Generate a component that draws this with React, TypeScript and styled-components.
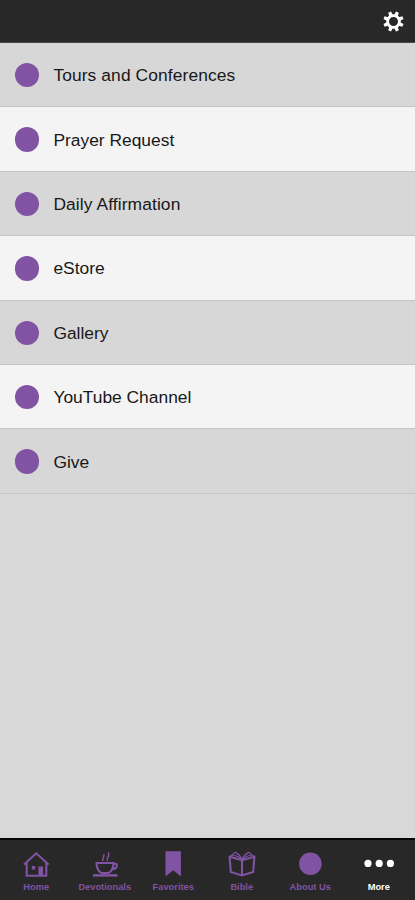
import React from "react";
import styled, { createGlobalStyle } from "styled-components";

const PURPLE = "#8053a3";

const GlobalStyle = createGlobalStyle`
  * { box-sizing: border-box; }
  body { margin: 0; background: #d8d8d8; font-family: "Liberation Sans", Arial, sans-serif; }
`;

const Screen = styled.div`
  display: flex;
  flex-direction: column;
  width: 415px;
  height: 900px;
  overflow: hidden;
  background: #d8d8d8;
`;

const Header = styled.header`
  display: flex;
  flex: none;
  align-items: center;
  justify-content: flex-end;
  height: 43px;
  padding: 1px 11px 0 0;
  background: #282828;
  border-bottom: 1px solid #484848;
`;

const SettingsButton = styled.button`
  display: flex;
  padding: 0;
  border: 0;
  background: none;
`;

const Menu = styled.ul`
  flex: 1;
  margin: 0;
  padding: 0;
  list-style: none;
`;

const MenuRow = styled.li<{ $light: boolean }>`
  display: flex;
  align-items: center;
  gap: 14px;
  height: 64.4px;
  padding: 1px 0 0 15px;
  background: ${(p) => (p.$light ? "#f4f4f4" : "#d7d7d7")};
  border-bottom: 1px solid #c4c4c4;
`;

const Bullet = styled.span`
  width: 24.4px;
  height: 24.4px;
  border-radius: 50%;
  background: ${PURPLE};
`;

const MenuLabel = styled.span<{ $spacing: number }>`
  font-size: 17.4px;
  line-height: 20px;
  color: #181818;
  letter-spacing: ${(p) => p.$spacing}px;
`;

const TabBar = styled.nav`
  display: grid;
  flex: none;
  grid-template-columns: repeat(6, 68.5px);
  justify-content: center;
  height: 62px;
  background: #282828;
  border-top: 2px solid #050505;
`;

const Tab = styled.div<{ $active?: boolean }>`
  display: flex;
  flex-direction: column;
  align-items: center;
  padding-top: 10px;
  color: ${(p) => (p.$active ? "#ffffff" : PURPLE)};
`;

const TabIcon = styled.svg`
  display: block;
  width: 32px;
  height: 28px;
  fill: none;
  stroke: currentColor;
  stroke-width: 2.1;
`;

const TabLabel = styled.span`
  margin-top: 4px;
  font-size: 9.3px;
  font-weight: 700;
  line-height: 11px;
  white-space: nowrap;
`;

const items = [
  { label: "Tours and Conferences", spacing: 0.1 },
  { label: "Prayer Request", spacing: 0 },
  { label: "Daily Affirmation", spacing: 0.1 },
  { label: "eStore", spacing: 0 },
  { label: "Gallery", spacing: 0 },
  { label: "YouTube Channel", spacing: 0 },
  { label: "Give", spacing: 0 },
];

const tabs = [
  {
    label: "Home",
    icon: (
      <>
        <path d="M4 14.5 16.3 3.3 28.6 14.5M6.7 12.5v13.2h19.6V12.5" />
        <path d="M18.4 26v-9.5h4.7V26z" fill="currentColor" stroke="none" />
        <path d="M11.8 16h3.4v3.4h-3.4z" fill="currentColor" stroke="none" />
      </>
    ),
  },
  {
    label: "Devotionals",
    icon: (
      <>
        <path d="M7.5 13h17c0 5-2.6 9.6-5.4 10h-6c-3.1-.5-5.6-5-5.6-10zM24.5 14.2c3-1.1 4.2.4 3.2 2.5-.8 1.6-2.5 2.5-4.6 2.4" />
        <path d="M4 25.4h24.5" strokeWidth="2.5" />
        <path d="M14 11c-1.5-2.6 2-3.8.7-7M18.4 11c-1.5-3 2.7-4.8 1-8.8" strokeWidth="1.5" />
      </>
    ),
  },
  {
    label: "Favorites",
    icon: <path d="M8.5 1.2h15.4v25.2l-7.7-6.2-7.7 6.2z" fill="currentColor" stroke="none" />,
  },
  {
    label: "Bible",
    icon: (
      <>
        <path d="m5.6 7.2 10.4 3 10.4-3 2-.4-1.2 15.2L16 25.5 4.8 22 3.6 6.8zM16 10.2v15.3" />
        <path d="m4 6.8 5-4.4c3.5 1.3 5.8 3.8 7 7.6 1.2-3.8 3.5-6.3 7-7.6l5 4.4M6.5 5.5C11 5.6 14 7 16 10c2-3 5-4.4 9.5-4.5" strokeWidth="1.2" />
      </>
    ),
  },
  {
    label: "About Us",
    icon: <circle cx="16.4" cy="13.8" r="11.3" fill="currentColor" stroke="none" />,
  },
  {
    label: "More",
    active: true,
    icon: (
      <g fill="currentColor" stroke="none">
        <circle cx="5" cy="13.4" r="3.6" />
        <circle cx="16.2" cy="13.4" r="3.6" />
        <circle cx="27.4" cy="13.4" r="3.6" />
      </g>
    ),
  },
];

const GearIcon = () => (
  <svg width="21" height="21" viewBox="-10.5 -10.5 21 21">
    <circle r="5.9" fill="none" stroke="#ffffff" strokeWidth="2.8" />
    {[0, 45, 90, 135, 180, 225, 270, 315].map((angle) => (
      <path
        key={angle}
        d="M-1.9-6.5 -1.5-10.2H1.5L1.9-6.5z"
        fill="#ffffff"
        transform={`rotate(${angle + 22.5})`}
      />
    ))}
  </svg>
);

export default function App() {
  return (
    <Screen>
      <GlobalStyle />
      <Header>
        <SettingsButton aria-label="Settings">
          <GearIcon />
        </SettingsButton>
      </Header>
      <Menu>
        {items.map((item, index) => (
          <MenuRow key={item.label} $light={index % 2 === 1}>
            <Bullet />
            <MenuLabel $spacing={item.spacing}>{item.label}</MenuLabel>
          </MenuRow>
        ))}
      </Menu>
      <TabBar>
        {tabs.map((tab) => (
          <Tab key={tab.label} $active={tab.active}>
            <TabIcon viewBox="0 0 32 28">{tab.icon}</TabIcon>
            <TabLabel>{tab.label}</TabLabel>
          </Tab>
        ))}
      </TabBar>
    </Screen>
  );
}
